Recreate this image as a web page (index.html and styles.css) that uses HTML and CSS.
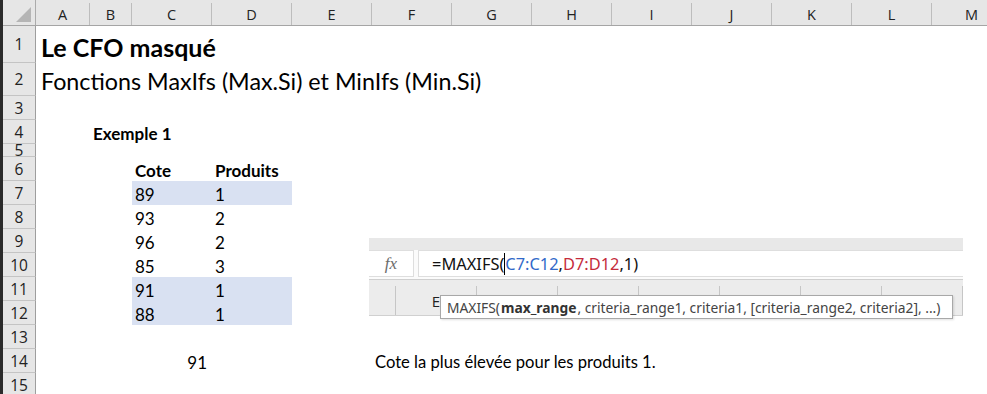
FILE: index.html
```html
<!DOCTYPE html>
<html lang="fr">
<head>
  <meta charset="UTF-8">
  <title>Le CFO masqué - MaxIfs et MinIfs</title>
  <link rel="stylesheet" href="styles.css">
</head>
<body>
  <div class="edge"></div>
  <div class="sheet">
    <div class="row head">
      <div class="corner">
        <svg width="16" height="16" viewBox="0 0 16 16"><polygon points="15,0 15,15 0,15" fill="#b5b5b5"/></svg>
      </div>
      <div class="col">A</div><div class="col">B</div><div class="col">C</div><div class="col">D</div>
      <div class="col">E</div><div class="col">F</div><div class="col">G</div><div class="col">H</div>
      <div class="col">I</div><div class="col">J</div><div class="col">K</div><div class="col">L</div>
      <div class="col">M</div>
    </div>

    <div class="row r1"><div class="num">1</div><div class="cell wide title">Le CFO masqué</div></div>
    <div class="row r2"><div class="num">2</div><div class="cell wide subtitle">Fonctions MaxIfs (Max.Si) et MinIfs (Min.Si)</div></div>
    <div class="row"><div class="num">3</div></div>
    <div class="row"><div class="num">4</div><div class="cell b-col wide bold">Exemple 1</div></div>
    <div class="row r5"><div class="num">5</div></div>
    <div class="row"><div class="num">6</div><div class="cell c-col bold">Cote</div><div class="cell d-col bold">Produits</div></div>
    <div class="row"><div class="num">7</div><div class="cell c-col hl">89</div><div class="cell d-col hl">1</div></div>
    <div class="row"><div class="num">8</div><div class="cell c-col">93</div><div class="cell d-col">2</div></div>
    <div class="row"><div class="num">9</div><div class="cell c-col">96</div><div class="cell d-col">2</div></div>
    <div class="row"><div class="num">10</div><div class="cell c-col">85</div><div class="cell d-col">3</div></div>
    <div class="row"><div class="num">11</div><div class="cell c-col hl">91</div><div class="cell d-col hl">1</div></div>
    <div class="row"><div class="num">12</div><div class="cell c-col hl">88</div><div class="cell d-col hl">1</div></div>
    <div class="row"><div class="num">13</div></div>
    <div class="row"><div class="num">14</div><div class="cell c-col right">91</div><div class="cell f-col wide note">Cote la plus élevée pour les produits 1.</div></div>
    <div class="row"><div class="num">15</div></div>
  </div>

  <!-- capture de la barre de formule collée par-dessus la feuille -->
  <div class="formula-shot">
    <div class="fb-top"></div>
    <div class="fb-row">
      <div class="fx">fx</div>
      <div class="fb-input">=MAXIFS(<span class="caret"></span><span class="ref-blue">C7:C12</span>,<span class="ref-red">D7:D12</span>,1)</div>
    </div>
    <div class="fb-cols">
      <div class="fb-gap"></div>
      <div class="fb-col">E</div><div class="fb-col"></div><div class="fb-col"></div><div class="fb-col"></div>
      <div class="fb-col"></div><div class="fb-col"></div><div class="fb-col"></div>
    </div>
  </div>
  <div class="tip">MAXIFS(<strong>max_range</strong>, criteria_range1, criteria1, [criteria_range2, criteria2], ...)</div>
</body>
</html>
```

FILE: styles.css
```css
body {
  margin: 0;
  width: 987px;
  height: 394px;
  overflow: hidden;
  display: flex;
  background: #fff;
  font-family: 'Lato', 'Liberation Sans', sans-serif;
  color: #000;
  position: relative;
}
.edge {
  width: 3px;
  flex: none;
  background: #2b2b2b;
}
.sheet {
  flex: none;
}
.row {
  display: grid;
  grid-template-columns: 33px 54px 42px 80px 80px 80px 80px 80px 80px 80px 80px 80px 80px 80px;
  height: 24px;
}
.head {
  height: 26px;
  background: #e6e6e6;
  border-bottom: 1px solid #a5a5a5;
  box-sizing: border-box;
}
.corner {
  display: flex;
  justify-content: flex-end;
  align-items: flex-end;
  padding: 0 3px 2px 0;
  border-right: 1px solid #ababab;
}
.col {
  display: flex;
  align-items: center;
  justify-content: center;
  font-family: 'Open Sans', 'Liberation Sans', sans-serif;
  font-size: 14.5px;
  color: #222;
  border-right: 1px solid #bdbdbd;
  margin-top: 3px;
}
.r1 { height: 37px; }
.r2 { height: 33px; }
.r5 { height: 13px; overflow: hidden; }
.num {
  grid-column: 1;
  background: #e6e6e6;
  border-right: 1px solid #9e9e9e;
  border-bottom: 1px solid #c4c4c4;
  display: flex;
  align-items: center;
  justify-content: center;
  font-family: 'Open Sans', 'Liberation Sans', sans-serif;
  font-size: 15.5px;
  color: #222;
  overflow: hidden;
}
.r5 .num {
  line-height: 12px;
}
.cell {
  grid-column: 2;
  display: flex;
  align-items: flex-end;
  padding: 0 3px;
  font-size: 17px;
  line-height: 21px;
  white-space: nowrap;
}
.wide { grid-column-end: -1; }
.b-col { grid-column-start: 3; }
.c-col { grid-column: 4; }
.d-col { grid-column: 5; }
.f-col { grid-column-start: 7; }
.right { justify-content: flex-end; padding-right: 5px; }
.bold { font-weight: bold; }
.note { font-size: 16.6px; }
.hl { background: #d9e1f2; }
.title {
  font-size: 25px;
  font-weight: bold;
  line-height: 32px;
  padding-left: 5px;
}
.subtitle {
  font-size: 23.3px;
  line-height: 30px;
  padding-left: 5px;
}

.formula-shot {
  position: absolute;
  left: 369px;
  top: 238px;
  width: 594px;
  height: 78px;
  background: #f7f7f7;
  border-bottom: 1px solid #d0d0d0;
  box-sizing: border-box;
  display: flex;
  flex-direction: column;
}
.fb-top {
  height: 12px;
  background: #e8e8e8;
}
.fb-row {
  height: 30px;
  display: flex;
  gap: 4px;
  background: #fbfbfb;
  border-bottom: 1px solid #cfcfcf;
  box-sizing: border-box;
  padding-bottom: 2px;
}
.fx {
  width: 44px;
  border: 1px solid #dedede;
  border-left: none;
  background: #fff;
  font-family: 'Liberation Serif', serif;
  font-style: italic;
  font-size: 17px;
  color: #6b6b6b;
  display: flex;
  align-items: center;
  justify-content: center;
}
.fb-input {
  flex: 1;
  border: 1px solid #dedede;
  border-right: none;
  background: #fff;
  font-family: 'Noto Sans', 'Open Sans', sans-serif;
  font-size: 16.4px;
  color: #111;
  display: flex;
  align-items: center;
  padding-left: 13px;
  white-space: nowrap;
}
.caret {
  display: inline-block;
  width: 0;
  height: 22px;
  border-left: 1px solid #000;
}
.ref-blue { color: #3169c9; }
.ref-red { color: #c52b3b; }
.fb-cols {
  flex: 1;
  display: flex;
  background: #ececec;
  padding-top: 6px;
}
.fb-gap {
  width: 26px;
  border-right: 1px solid #c6c6c6;
}
.fb-col {
  width: 80px;
  flex: none;
  border-right: 1px solid #c6c6c6;
  display: flex;
  justify-content: center;
  align-items: center;
  font-family: 'Open Sans', sans-serif;
  font-size: 15px;
  color: #222;
}
.tip {
  position: absolute;
  left: 440px;
  top: 295px;
  width: 513px;
  height: 24px;
  box-sizing: border-box;
  background: #fff;
  border: 1px solid #a8a8a8;
  box-shadow: 1px 1px 2px rgba(0, 0, 0, 0.12);
  font-family: 'Noto Sans', 'Open Sans', sans-serif;
  font-size: 13.8px;
  color: #444;
  padding-left: 6px;
  display: flex;
  align-items: center;
  white-space: nowrap;
}
.tip strong { color: #333; margin: 0 1px; }
```
